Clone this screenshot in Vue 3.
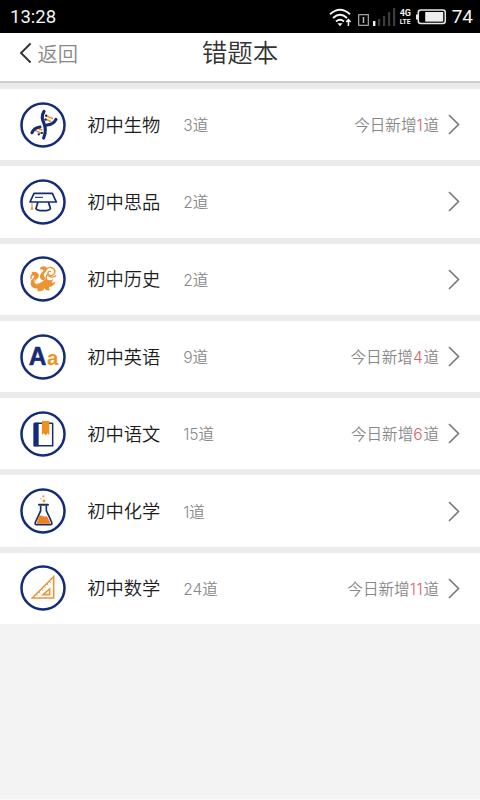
<script setup>
const subjects = [
  { icon: 'biology', name: '初中生物', count: 3, added: 1 },
  { icon: 'ethics', name: '初中思品', count: 2, added: 0 },
  { icon: 'history', name: '初中历史', count: 2, added: 0 },
  { icon: 'english', name: '初中英语', count: 9, added: 4 },
  { icon: 'chinese', name: '初中语文', count: 15, added: 6 },
  { icon: 'chemistry', name: '初中化学', count: 1, added: 0 },
  { icon: 'math', name: '初中数学', count: 24, added: 11 },
]
</script>

<template>
  <div class="screen">
    <div class="status">
      <span class="clock">13:28</span>
      <div class="indicators">
        <svg class="wifi" width="23" height="20" viewBox="0 0 23 20" fill="none" stroke="#f4f4f4" stroke-width="1.9">
          <path d="M1 6.2Q11 -2.6 21 6.2M4 10Q11 3.6 18 10M7 13.5Q11 10 15 13.5" />
          <path d="M8.4 15.3h5.2L11 18.2z" fill="#f4f4f4" stroke="none" />
          <path d="M19.4 18v-6M17.2 14l2.2-2.3 2.2 2.3" stroke-width="1.5" />
        </svg>
        <svg class="sim" width="11" height="12" viewBox="0 0 11 12" fill="none" stroke="#bbb" stroke-width="1.1">
          <rect x=".7" y=".7" width="9.6" height="10.6" />
          <path d="M5.5 3v6" stroke-width="1.5" />
        </svg>
        <svg class="signal" width="23" height="18" viewBox="0 0 23 18">
          <path d="M0 13h2.4v5H0z" fill="#f4f4f4" />
          <path d="M5 11h2.2v7H5zM10 8h2.2v10H10zM15 4h2.2v14H15zM20 0h2.2v18H20z" fill="#3c3c3c" />
        </svg>
        <div class="network"><span>4G</span><span>LTE</span></div>
        <svg class="battery" width="31" height="16" viewBox="0 0 31 16">
          <rect x="2.3" y="1" width="27" height="13.4" rx="2.5" fill="none" stroke="#e8e8e8" stroke-width="1.5" />
          <path d="M0 5.5h2v5H0z" fill="#e8e8e8" />
          <rect x="9.2" y="3" width="18" height="9.6" fill="#eee" />
        </svg>
        <span class="level">74</span>
      </div>
    </div>

    <header class="header">
      <div class="back">
        <svg width="13" height="22" viewBox="0 0 13 22" fill="none" stroke="#333" stroke-width="1.9">
          <path d="M11.6 1.5 2 11l9.6 9.5" />
        </svg>
        <span>返回</span>
      </div>
      <h1 class="title">错题本</h1>
    </header>

    <main class="list">
      <div v-for="s in subjects" :key="s.icon" class="row">
        <svg class="icon" viewBox="0 0 138 138" fill="none">
          <circle cx="69" cy="69" r="64.5" stroke="#142c77" stroke-width="7.5" />
          <g v-if="s.icon === 'biology'" transform="translate(-29 -34)">
            <path d="M106 75 128 84M104 84l19 9M79 111l17 8M73 119l20 9" stroke="#e39a36" stroke-width="5" />
            <path d="M101 62C92 77 96 87 101 98c6 15 5 29-1 44M65 126c5-12 13-16 24-17M110 103c13-1 21-5 27-17" stroke="#142c77" stroke-width="9.5" stroke-linecap="round" />
            <path d="M107 75h1M105 87h1M94 127h1M85 131h1" stroke="#142c77" stroke-width="6.5" stroke-linecap="round" />
          </g>
          <g v-else-if="s.icon === 'ethics'" transform="translate(-29 -25)">
            <path d="M71 68h55l12 26H59zM82 96c-1 6-3 10-5 18 5 8 38 8 43 0-1-8-4-12-5-18" stroke="#142c77" stroke-width="5.2" stroke-linejoin="round" />
            <path d="M74 80h24" stroke="#142c77" stroke-width="3.2" />
            <path d="M65 96v10" stroke="#b98638" stroke-width="2.5" />
            <path d="m65 102 4.5 14q-4.5 3-9 0z" fill="#e29a2e" />
          </g>
          <g v-else-if="s.icon === 'history'" transform="translate(-29 -33)">
            <path d="M91 66c9-5 19-2 19 6 0 7-8 11-10 17 0 5 6 8 4 13-3 6-12 4-14-2-3-7 0-14 5-18 4-3 5-5 4-7-4-3-6 0-10-2z" fill="#ec9332" />
            <path d="M63 82c7-4 17-2 21 4 4 8-2 14-7 18-6 6-3 12 5 12 9-1 16-8 24-14l8 3c5 2 9 1 13-3 1 5-1 8-4 11 5 1 9 0 13-4-3 11-10 16-20 17l2 10c-8 2-13-1-16-7-3 10-12 12-21 8v-7c-12 2-21-6-20-17 1-9 10-13 11-19-1-4-4-3-9-1 4-4 3-8 0-11z" fill="#ec9332" />
            <path d="M109 72c11-10 25-2 25 9-1 9-12 14-19 8-5-5-1-12 5-9M115 93c8 5 15 4 21-1M64 108c0 10 5 16 13 19M112 88c-5 5-6 11-4 17M67 88c-5 4-6 9-5 13" stroke="#ec9332" stroke-width="4" stroke-linecap="round" />
            <path d="M73 101c-4 8 0 15 9 17" stroke="#fff" stroke-width="1.6" />
          </g>
          <g v-else-if="s.icon === 'english'" class="letters">
            <text x="26" y="92" font-size="75" fill="#142c77" stroke="#142c77" stroke-width="1.5" textLength="53" lengthAdjust="spacingAndGlyphs">A</text>
            <text x="81" y="92" font-size="62" fill="#ed9323" textLength="34" lengthAdjust="spacingAndGlyphs">a</text>
          </g>
          <g v-else-if="s.icon === 'chinese'" transform="translate(-29 -31)">
            <path d="M69 70q0-4 4-4h12v71H69z" fill="#142c77" />
            <path d="M73 67.5h52q2 0 2 2V135H71" stroke="#142c77" stroke-width="4.5" />
            <path d="M95 61h22v43l-5-6-6 6-6-6-5 6z" fill="#ee901e" />
          </g>
          <g v-else-if="s.icon === 'chemistry'" transform="translate(-29 -29)">
            <path d="M91 82v15c-3 8-11 24-16 35-2 5 1 7 4 7h41c4 0 6-3 4-7-4-11-12-26-16-35V82" stroke="#173060" stroke-width="5" stroke-linejoin="round" />
            <path d="M86 79h27" stroke="#173060" stroke-width="6" stroke-linecap="round" />
            <path d="M87 112c8-2 12 5 23 2l10 19q1 3-3 3H82q-4 0-2-4z" fill="#ed8125" />
            <circle cx="99" cy="54" r="3.4" fill="#d9a44c" /><circle cx="92" cy="61" r="2.3" fill="#d9a44c" /><circle cx="101" cy="68" r="4.2" fill="#e8973c" />
          </g>
          <g v-else transform="translate(-29 -31)">
            <path d="M130 66v64H66zM118 103v17h-20z" stroke="#e5983c" stroke-width="4.8" stroke-linejoin="miter" />
            <path d="m79 119 4 4m3-11 4 4m4-12 4 4m4-12 4 4m4-12 4 4m4-11 4 4" stroke="#e5983c" stroke-width="2.5" />
          </g>
        </svg>
        <span class="name">{{ s.name }}</span>
        <span class="count">{{ s.count }}道</span>
        <span v-if="s.added" class="added">今日新增<em>{{ s.added }}</em>道</span>
        <svg class="arrow" width="12" height="21" viewBox="0 0 12 21" fill="none" stroke="#777" stroke-width="1.6">
          <path d="m1 1 9.5 9.5L1 20" />
        </svg>
      </div>
    </main>
  </div>
</template>

<style>
body { background: #f3f3f3; }
</style>

<style scoped>
.screen {
  box-sizing: border-box;
  display: flex;
  flex-direction: column;
  height: 800px;
  overflow: hidden;
  border-bottom: 1px solid #fafafa;
  background: #f3f3f3;
  font-family: "Noto Sans CJK SC", sans-serif;
}
.status {
  box-sizing: border-box;
  flex: none;
  display: flex;
  justify-content: space-between;
  height: 33px;
  padding: 0 7px 0 10px;
  background: #000;
  color: #f4f4f4;
  font: 18.5px/34px Roboto, sans-serif;
}
.indicators { display: flex; align-items: flex-start; }
.wifi { margin: 8px 6px 0 0; }
.sim { margin: 14px 4px 0 0; }
.signal { margin: 8px 4px 0 0; }
.network {
  display: flex;
  flex-direction: column;
  width: 12px;
  margin: 9px 4px 0 0;
  font: 700 9px/9px Roboto, sans-serif;
}
.network span:last-child { font-size: 6.8px; line-height: 8px; }
.battery { margin: 9px 5px 0 0; }
.level { font-size: 19px; }
.header {
  box-sizing: border-box;
  flex: none;
  display: grid;
  grid-template-columns: 1fr auto 1fr;
  height: 50px;
  border-bottom: 2px solid #cecece;
  background: #fff;
}
.back {
  display: flex;
  align-items: center;
  gap: 6px;
  height: 40px;
  padding-left: 18.5px;
  color: #888;
  font-size: 20.3px;
  font-weight: 350;
}
.title {
  margin: 0;
  color: #333;
  font-size: 25.5px;
  font-weight: 350;
  line-height: 36px;
}
.list {
  display: flex;
  flex-direction: column;
  gap: 6px;
  padding-top: 6px;
  background: #ebebeb;
}
.row {
  box-sizing: border-box;
  display: flex;
  align-items: center;
  height: 71.3px;
  padding: 0 20px 0 19.7px;
  background: #fff;
}
.icon { flex: none; width: 46px; height: 46px; }
.letters { font-family: "Liberation Sans", sans-serif; font-weight: 700; }
.name {
  width: 96px;
  margin-left: 21.5px;
  padding-bottom: 2px;
  color: #1c1c1c;
  font-size: 18.3px;
  font-weight: 350;
}
.count, .added {
  padding-bottom: 1px;
  color: #888;
  font-family: Inter, "Noto Sans CJK SC", sans-serif;
  font-size: 15.6px;
  font-weight: 350;
}
.added { margin-left: auto; }
.added em {
  color: #e0606c;
  font-style: normal;
  letter-spacing: 0.7px;
}
.arrow { flex: none; margin-left: 9px; }
.count + .arrow { margin-left: auto; }
</style>
